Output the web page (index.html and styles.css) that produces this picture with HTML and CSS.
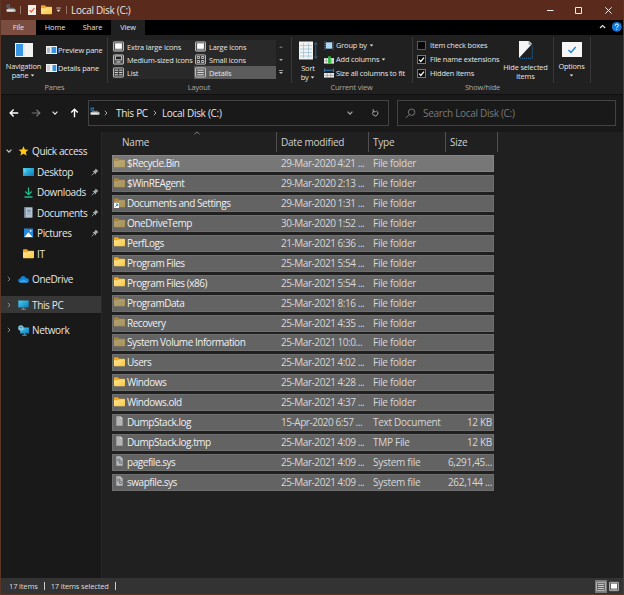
FILE: index.html
```html
<!DOCTYPE html>
<html lang="en">
<head>
<meta charset="utf-8">
<title>Local Disk (C:)</title>
<link rel="stylesheet" href="styles.css">
</head>
<body>
<svg class="defs" width="0" height="0">
  <defs>
    <linearGradient id="gold" x1="0" y1="0" x2="1" y2="1"><stop offset="0" stop-color="#ffe69a"/><stop offset="1" stop-color="#fbc83c"/></linearGradient>
    <linearGradient id="screen" x1="0" y1="0" x2="1" y2="1"><stop offset="0" stop-color="#45d3f0"/><stop offset="1" stop-color="#1277b8"/></linearGradient>
    <symbol id="folder" viewBox="0 0 11 10"><path d="M0 1Q0 .3.7.3H4L5.2 1.7H10.3Q11 1.7 11 2.4V8H0z" fill="#f0a81c"/><path d="M0 3.2H4.3L5.4 2.2H11V8.6Q11 9.3 10.3 9.3H.7Q0 9.3 0 8.6z" fill="url(#gold)"/></symbol>
    <symbol id="drive" viewBox="0 0 11 10"><path d="M.5.8h1.6v1.5H.5zM2.6.6h1.8v1.7H2.6zM.5 2.8h1.6v1.3H.5zM2.6 2.8h1.8v1.3H2.6z" fill="#1b86d8"/><path d="M2.6 4.2h6L10 6H1z" fill="#777"/><rect x=".5" y="5.7" width="10" height="2.8" rx=".8" fill="#e4e8e8"/><path d="M8 7h1.5" stroke="#35b558" stroke-width=".8"/></symbol>
    <symbol id="page" viewBox="0 0 8 11"><path d="M.5.3H5L7.5 2.8V10.6H.5z" fill="#b4b4b4"/><path d="M5 .3V2.8H7.5" fill="#ddd"/></symbol>
    <symbol id="syspage" viewBox="0 0 8 11"><path d="M.5.3H5L7.5 2.8V10.6H.5z" fill="#b9bbbc"/><circle cx="3.2" cy="4.4" r="1.4" fill="none" stroke="#667078"/><circle cx="5.1" cy="7.2" r="1.2" fill="none" stroke="#56616a"/></symbol>
    <symbol id="pin" viewBox="0 0 8 8"><path d="M4.7.5 7.5 3.3 6.5 3.6 5.1 5 4.8 6.5 1.5 3.2 3 2.9 4.4 1.5z" fill="#a3abb1"/><path d="M3 5 .7 7.3" stroke="#a3abb1" stroke-width=".9"/></symbol>
    <symbol id="right" viewBox="0 0 6 8"><path d="M1.8 1.8 4 4 1.8 6.2" fill="none" stroke="currentColor"/></symbol>
    <symbol id="down" viewBox="0 0 8 6"><path d="M1.6 1.7 4 4.1 6.4 1.7" fill="none" stroke="currentColor" stroke-width="1.2"/></symbol>
    <symbol id="tri" viewBox="0 0 5 3"><path d="M.7.4h3.6L2.5 2.4z" fill="currentColor"/></symbol>
    <symbol id="lines" viewBox="0 0 12 11"><rect x=".5" y=".5" width="11" height="10" rx=".8" fill="#666" stroke="#c8c8c8"/><path d="M2.5 3h7M2.5 5.5h7M2.5 8h7" stroke="#eee" stroke-width=".9"/></symbol>
    <symbol id="big" viewBox="0 0 12 11"><rect x=".5" y=".5" width="11" height="10" rx=".8" fill="#555" stroke="#c8c8c8"/><path d="M2.3 2h7.4v6H2.3z" fill="#fff"/><path d="M2 9h8" stroke="#ddd" stroke-width=".6"/></symbol>
    <symbol id="med" viewBox="0 0 12 11"><rect x=".5" y=".5" width="11" height="10" rx=".8" fill="#555" stroke="#c8c8c8"/><path d="M2.7 1.8h6.6v4H2.7z" fill="#222" stroke="#eee" stroke-width=".8"/><path d="M4 8.2h4" stroke="#eee"/></symbol>
    <symbol id="small" viewBox="0 0 12 11"><rect x=".5" y=".5" width="11" height="10" rx=".8" fill="#333" stroke="#c8c8c8"/><path d="M2.5 2.2h2.4v2.2H2.5zM7.2 2.2h2.4v2.2H7.2zM2.5 6.6h2.4v2.2H2.5zM7.2 6.6h2.4v2.2H7.2z" fill="none" stroke="#eee" stroke-width=".8"/></symbol>
    <symbol id="list" viewBox="0 0 12 11"><rect x=".5" y=".5" width="11" height="10" rx=".8" fill="#444" stroke="#c8c8c8"/><path d="M2 3h3.4M2 5.5h3.4M2 8h3.4M6.7 3h3.4M6.7 5.5h3.4M6.7 8h3.4" stroke="#eee" stroke-width=".9"/></symbol>
    <symbol id="check" viewBox="0 0 9 9"><rect x=".5" y=".5" width="8" height="8" fill="#0b0b0b" stroke="#777"/><path d="M2.1 4.6 3.8 6.4 7 2.6" fill="none" stroke="#fff" stroke-width="1.3"/></symbol>
    <symbol id="monitor" viewBox="0 0 11 10"><path d="M.3.5h10.4v7H.3z" fill="url(#screen)"/><path d="M5.5 7.5v1.4M3 9.2h5" stroke="#58aed0" stroke-width=".9"/></symbol>
  </defs>
</svg>
<div class="window">
  <header class="titlebar">
    <svg class="t-drive" width="10" height="9"><use href="#drive"/></svg>
    <i class="t-sep"></i>
    <svg class="t-props" width="8" height="10" viewBox="0 0 8 10"><path d="M0 0h8v10H0z" fill="#f4eeea"/><path d="M1.7 5.2 3.3 7 6.4 3" fill="none" stroke="#e0622c" stroke-width="1.2"/></svg>
    <svg class="t-folder" width="11" height="10"><use href="#folder"/></svg>
    <svg class="t-more" width="5" height="6" viewBox="0 0 5 6"><path d="M.3 1h4.4" stroke="#ddd" stroke-width=".8"/><path d="M.5 2.8h4L2.5 5z" fill="#ddd"/></svg>
    <i class="t-sep"></i>
    <h1>Local Disk (C:)</h1>
    <svg class="controls" width="68" height="10" viewBox="0 0 68 10"><path d="M1 5.5h6.5M29.5 2.5h6v6h-6zM59.3 2.3l6.3 6.3M65.6 2.3 59.3 8.6" fill="none" stroke="#eee"/></svg>
  </header>
  <nav class="tabs">
    <span class="tab file">File</span><span class="tab home">Home</span><span class="tab share">Share</span><span class="tab view">View</span>
    <svg class="help" width="24" height="12" viewBox="0 0 24 12"><path d="M1 8 3.6 5.5 6.2 8" fill="none" stroke="#ddd" stroke-width="1.2"/><circle cx="17.8" cy="6.8" r="4.9" fill="#1679d9"/><path d="M16.2 5.7q0-1.7 1.6-1.7t1.6 1.5q0 .8-1.6 1.7v.6M17.8 8.9v1" fill="none" stroke="#fff"/></svg>
  </nav>
  <section class="ribbon">
    <div class="group panes">
      <div class="group-body">
        <div class="large nav-pane"><svg width="18" height="14" viewBox="0 0 18 14"><path d="M0 0h18v14H0z" fill="#f2f2f2"/><path d="M1 1h7v12H1z" fill="#3795e6"/><path d="M9 1v12" stroke="#ddd"/></svg><span>Navigation<br>pane <svg width="5" height="3"><use href="#tri"/></svg></span></div>
        <div class="stack pane-stack">
          <span><svg width="11" height="8" viewBox="0 0 11 8"><path d="M0 0h11v8H0z" fill="#f2f2f2"/><path d="M1 1.5h3V7H1z" fill="#aeb9c2"/><path d="M5.5 1h4.7v6H5.5z" fill="#3795e6"/></svg>Preview pane</span>
          <span><svg width="11" height="8" viewBox="0 0 11 8"><path d="M0 0h11v8H0z" fill="#f2f2f2"/><path d="M1 2h3M1 4h3M1 6h3" stroke="#aaa"/><path d="M6.5 1h3.7v6H6.5z" fill="#3795e6"/></svg>Details pane</span>
        </div>
      </div>
      <div class="caption">Panes</div>
    </div>
    <div class="group layout">
      <div class="group-body">
        <div class="gallery">
          <span><svg width="11" height="11"><use href="#big"/></svg>Extra large icons</span><span><svg width="11" height="11"><use href="#big"/></svg>Large icons</span>
          <span><svg width="11" height="11"><use href="#med"/></svg>Medium-sized icons</span><span><svg width="11" height="11"><use href="#small"/></svg>Small icons</span>
          <span><svg width="11" height="11"><use href="#list"/></svg>List</span><span class="selected"><svg width="11" height="11"><use href="#lines"/></svg>Details</span>
        </div>
        <svg class="scroll" width="9" height="40" viewBox="0 0 9 40"><path d="M3 9h4L5 7z" fill="#666"/><path d="M3 20h4L5 22z" fill="#aaa"/><path d="M3 31.5h4" stroke="#bbb" stroke-width=".8"/><path d="M3 33h4L5 35z" fill="#bbb"/></svg>
      </div>
      <div class="caption">Layout</div>
    </div>
    <div class="group current">
      <div class="group-body">
        <div class="large sort"><svg width="19" height="19" viewBox="0 0 19 19"><path d="M0 .5h14v18H0z" fill="#f3f3f3"/><path d="M1 4.5h12M1 8h12M1 11.5h12M1 15h12M4.5 2v15M9.5 2v15" stroke="#9fc3d5" stroke-width=".8"/><path d="M16.8 2v15M15.4 3.5 16.8 1.6l1.4 1.9M15.4 15.5l1.4 1.9 1.4-1.9" fill="none" stroke="#2477bd" stroke-width=".8"/></svg><span>Sort<br>by <svg width="5" height="3"><use href="#tri"/></svg></span></div>
        <div class="stack current-stack">
          <span><svg width="10" height="9" viewBox="0 0 11 9"><path d="M1 0v9M10 0v9" stroke="#999" stroke-dasharray="1 1"/><path d="M2 1h7v7H2z" fill="#a9d9fb"/></svg>Group by <svg class="tri" width="5" height="3"><use href="#tri"/></svg></span>
          <span><svg width="10" height="9" viewBox="0 0 11 9"><path d="M0 3h11v6H0z" fill="#eee"/><path d="M2.5 3v6M8.5 3v6M0 6h11" stroke="#888" stroke-width=".6"/><path d="M4.5 1h3v8h-3z" fill="#27bd35"/></svg>Add columns <svg class="tri" width="5" height="3"><use href="#tri"/></svg></span>
          <span><svg width="10" height="10" viewBox="0 0 11 10"><path d="M0 5h11v5H0z" fill="#eee"/><path d="M3.5 5v5M7.5 5v5M0 7.5h11" stroke="#777" stroke-width=".6"/><path d="M.5 0v4M10.5 0v4M1 2h9" stroke="#3189d0"/></svg>Size all columns to fit</span>
        </div>
      </div>
      <div class="caption">Current view</div>
    </div>
    <div class="group show">
      <div class="group-body">
        <div class="stack show-stack">
          <span><svg width="9" height="9" viewBox="0 0 9 9"><rect x=".5" y=".5" width="8" height="8" fill="#080808" stroke="#5a5a5a"/></svg>Item check boxes</span>
          <span><svg width="9" height="9"><use href="#check"/></svg>File name extensions</span>
          <span><svg width="9" height="9"><use href="#check"/></svg>Hidden items</span>
        </div>
        <div class="large hide"><svg width="14" height="18" viewBox="0 0 14 18"><path d="M0 0h10l3 3L0 17z" fill="#f5f5f5"/><path d="M10 0v3.5h3" fill="#bbb" stroke="#777" stroke-width=".6"/><path d="M1 17.3h12.3V5" fill="none" stroke="#2879b8" stroke-dasharray="1 1"/></svg><span>Hide selected<br>items</span></div>
      </div>
      <div class="caption">Show/hide</div>
    </div>
    <div class="group options"><div class="large"><svg width="20" height="15" viewBox="0 0 20 15"><path d="M0 0h20v15H0z" fill="#f6f6f6"/><path d="M6.5 8 9 10.5 13.7 5" fill="none" stroke="#2385d8" stroke-width="1.5"/></svg><span>Options<br><svg width="5" height="3"><use href="#tri"/></svg></span></div></div>
  </section>
  <div class="addressbar">
    <svg class="nav-arrow back" width="10" height="10" viewBox="0 0 10 10"><path d="M1.2 5h8M4.6 1.6 1.2 5l3.4 3.4" fill="none" stroke="#fff" stroke-width="1.4"/></svg>
    <svg class="nav-arrow forward" width="10" height="10" viewBox="0 0 10 10"><path d="M.8 5h8M5.4 1.6 8.8 5 5.4 8.4" fill="none" stroke="#777" stroke-width="1.2"/></svg>
    <svg class="nav-arrow recent" width="8" height="6"><use href="#down"/></svg>
    <svg class="nav-arrow up" width="9" height="10" viewBox="0 0 9 10"><path d="M4.5 9.3V1.2M1.2 4.5l3.3-3.3 3.3 3.3" fill="none" stroke="#fff" stroke-width="1.4"/></svg>
    <div class="path">
      <svg class="path-drive" width="10" height="9"><use href="#drive"/></svg>
      <svg class="crumb" width="6" height="8"><use href="#right"/></svg><span class="pc">This PC</span>
      <svg class="crumb" width="6" height="8"><use href="#right"/></svg><span class="disk">Local Disk (C:)</span>
      <svg class="path-down" width="8" height="6"><use href="#down"/></svg>
      <svg class="refresh" width="9" height="10" viewBox="0 0 9 10"><path d="M2.4 3.5A2.6 2.6 0 1 0 5.3 2.9M2.2 1.2v2.5h2.5" fill="none" stroke="#aaa"/></svg>
    </div>
    <div class="search"><svg width="11" height="11" viewBox="0 0 11 11"><circle cx="6.6" cy="4.2" r="3.2" fill="none" stroke="#777"/><path d="M4.3 6.5.8 10" stroke="#777"/></svg>Search Local Disk (C:)</div>
  </div>
  <main>
    <aside>
      <div class="item root"><svg class="twist open" width="8" height="6"><use href="#down"/></svg><svg width="10" height="10" viewBox="0 0 10 10"><path d="m5 .2 1.4 3.2 3.5.4-2.6 2.3.8 3.5L5 7.8 1.9 9.6l.8-3.5L.1 3.8l3.5-.4z" fill="#ffc914"/></svg>Quick access</div>
      <div class="item"><svg width="11" height="10" viewBox="0 0 11 10"><path d="M0 1h11v8H0z" fill="url(#screen)"/><path d="M1.5 3h1M1.5 5h1" stroke="#fff" stroke-width=".8"/></svg>Desktop<svg class="pin" width="8" height="8"><use href="#pin"/></svg></div>
      <div class="item"><svg width="11" height="11" viewBox="0 0 11 11"><path d="M5.5.5v7M2.2 4.5l3.3 3.2 3.3-3.2M1.5 10h8" fill="none" stroke="#1dbb8a" stroke-width="1.3"/></svg>Downloads<svg class="pin" width="8" height="8"><use href="#pin"/></svg></div>
      <div class="item"><svg width="11" height="11" viewBox="0 0 11 11"><path d="M1.5.3h8v10.4h-8z" fill="#b4c3d5"/><path d="M1.5.3h1.5v10.4H1.5z" fill="#8196ad"/><path d="M4.2 2.6h3.4v2.6H4.2z" fill="#8399b3"/><path d="M4 7h4" stroke="#8399b3" stroke-width=".8"/></svg>Documents<svg class="pin" width="8" height="8"><use href="#pin"/></svg></div>
      <div class="item"><svg width="11" height="10" viewBox="0 0 11 10"><path d="M1 .5h9v9H1z" fill="#2388dc"/><path d="m1.5 9 3.8-4.7L9.5 9z" fill="#fff"/><circle cx="7.7" cy="2.8" r=".9" fill="#fff"/></svg>Pictures<svg class="pin" width="8" height="8"><use href="#pin"/></svg></div>
      <div class="item"><svg width="11" height="10"><use href="#folder"/></svg>IT</div>
      <div class="item root apart"><svg class="twist" width="6" height="8"><use href="#right"/></svg><svg width="11" height="8" viewBox="0 0 11 8"><path d="M2 7.5Q0 7.2.1 5.3.4 3.4 2.3 3.4 3 .8 5.4 1q1.8.2 2.4 1.9 2.9 0 3.1 2.3 0 2.2-2 2.3z" fill="#1682d5"/><path d="m1 7 4.2-2.6L10.5 7q-.6.5-1.5.5H2z" fill="#31a9ee"/></svg>OneDrive</div>
      <div class="item root apart active"><svg class="twist" width="6" height="8"><use href="#right"/></svg><svg width="11" height="10"><use href="#monitor"/></svg>This PC</div>
      <div class="item root apart"><svg class="twist" width="6" height="8"><use href="#right"/></svg><svg width="11" height="11" viewBox="0 0 11 11"><path d="M2.2 2.5H11v6H2.2z" fill="url(#screen)"/><path d="M6.5 8.5v1.3M4.4 10.2h4.3" stroke="#58aed0"/><circle cx="2.9" cy="3" r="2.7" fill="#8bd0ed"/><path d="M1 2.5h3.5M3 .7v4.6" stroke="#2d83b5" stroke-width=".6"/></svg>Network</div>
    </aside>
    <section class="files">
      <div class="columns"><span>Name<svg class="sort-mark" width="6" height="4" viewBox="0 0 6 4"><path d="M.5 3.2 3 .9l2.5 2.3" fill="none" stroke="#888" stroke-width=".9"/></svg></span><span>Date modified</span><span>Type</span><span>Size</span></div>
      <div class="rows">
        <div class="row focus"><svg class="dim"><use href="#folder"/></svg><span>$Recycle.Bin</span><span>29-Mar-2020 4:21 ...</span><span>File folder</span><span></span></div>
        <div class="row"><svg class="dim"><use href="#folder"/></svg><span>$WinREAgent</span><span>29-Mar-2020 2:13 ...</span><span>File folder</span><span></span></div>
        <div class="row"><svg viewBox="0 0 11 10"><use class="dim" href="#folder" width="11" height="10"/><path d="M0 5h5v5H0z" fill="#fff"/><path d="M1.3 8.7 3.6 6.4M2 6.2h1.8V8" fill="none" stroke="#1676c4" stroke-width=".9"/></svg><span>Documents and Settings</span><span>29-Mar-2020 1:31 ...</span><span>File folder</span><span></span></div>
        <div class="row"><svg class="dim"><use href="#folder"/></svg><span>OneDriveTemp</span><span>30-Mar-2020 1:52 ...</span><span>File folder</span><span></span></div>
        <div class="row"><svg><use href="#folder"/></svg><span>PerfLogs</span><span>21-Mar-2021 6:36 ...</span><span>File folder</span><span></span></div>
        <div class="row"><svg><use href="#folder"/></svg><span>Program Files</span><span>25-Mar-2021 5:54 ...</span><span>File folder</span><span></span></div>
        <div class="row"><svg><use href="#folder"/></svg><span>Program Files (x86)</span><span>25-Mar-2021 5:54 ...</span><span>File folder</span><span></span></div>
        <div class="row"><svg class="dim"><use href="#folder"/></svg><span>ProgramData</span><span>25-Mar-2021 8:16 ...</span><span>File folder</span><span></span></div>
        <div class="row"><svg class="dim"><use href="#folder"/></svg><span>Recovery</span><span>25-Mar-2021 4:35 ...</span><span>File folder</span><span></span></div>
        <div class="row"><svg class="dim"><use href="#folder"/></svg><span>System Volume Information</span><span>25-Mar-2021 10:0...</span><span>File folder</span><span></span></div>
        <div class="row"><svg><use href="#folder"/></svg><span>Users</span><span>25-Mar-2021 4:02 ...</span><span>File folder</span><span></span></div>
        <div class="row"><svg><use href="#folder"/></svg><span>Windows</span><span>25-Mar-2021 4:28 ...</span><span>File folder</span><span></span></div>
        <div class="row"><svg><use href="#folder"/></svg><span>Windows.old</span><span>25-Mar-2021 4:37 ...</span><span>File folder</span><span></span></div>
        <div class="row"><svg><use href="#page"/></svg><span>DumpStack.log</span><span>15-Apr-2020 6:57 ...</span><span>Text Document</span><span>12 KB</span></div>
        <div class="row"><svg><use href="#page"/></svg><span>DumpStack.log.tmp</span><span>25-Mar-2021 4:09 ...</span><span>TMP File</span><span>12 KB</span></div>
        <div class="row"><svg><use href="#syspage"/></svg><span>pagefile.sys</span><span>25-Mar-2021 4:09 ...</span><span>System file</span><span>6,291,45...</span></div>
        <div class="row"><svg><use href="#syspage"/></svg><span>swapfile.sys</span><span>25-Mar-2021 4:09 ...</span><span>System file</span><span>262,144 ...</span></div>
      </div>
    </section>
  </main>
  <footer><span class="count">17 items</span><i></i><span class="chosen">17 items selected</span><i></i><div class="modes"><b><svg width="10" height="11"><use href="#lines"/></svg></b><svg width="10" height="11"><use href="#big"/></svg></div></footer>
</div>
</body>
</html>
```
FILE: styles.css
```css
* { box-sizing: border-box; }
body { margin: 0; background: #191919; color: #e6e6e6; font: 10px "Open Sans", "Noto Sans", sans-serif; letter-spacing: -.3px; overflow: hidden; }
.defs { position: absolute; }
svg { flex: none; display: block; }
.window { width: 624px; height: 595px; display: flex; flex-direction: column; border: 1px solid #5b3627; border-top: 0; background: #191919; white-space: nowrap; }
.titlebar { height: 20px; flex: none; display: flex; align-items: center; background: #5a2b1c; padding-left: 5px; }
.t-drive { margin-top: -3px; }
.t-sep { width: 1px; height: 8px; background: #94766a; margin: 0 7px 0 4px; }
.t-folder { margin-left: 5px; }
.t-more { margin-left: 4px; }
.t-more + .t-sep { margin: 0 4px 0 5px; }
h1 { margin: 0; font-size: 10px; font-weight: 400; letter-spacing: -.3px; }
.controls { margin-left: auto; margin-right: 9px; }
.tabs { height: 15px; flex: none; display: flex; background: #000; font-size: 7.3px; letter-spacing: -.05px; font-weight: 500; line-height: 15px; }
.tab { text-align: center; }
.file { width: 35px; background: #7b4c40; }
.home { width: 38px; }
.share { width: 37px; }
.view { width: 34px; background: #202020; }
.help { margin: 0 0 0 auto; }
.ribbon { height: 60px; flex: none; display: flex; background: #202020; border-bottom: 1px solid #101010; font-size: 7.4px; letter-spacing: -.15px; font-weight: 500; }
.group { display: flex; flex-direction: column; padding-top: 2px; position: relative; }
.group::after { content: ""; position: absolute; right: 0; top: 2px; height: 46px; border-right: 1px solid #383838; }
.group-body { height: 45px; display: flex; }
.caption { text-align: center; line-height: 11px; color: #aaa; }
.panes { width: 107px; }
.layout { width: 184px; }
.layout .caption { padding-right: 2px; }
.current { width: 121px; }
.current .caption { padding-right: 2px; }
.show { width: 141px; }
.show .caption { padding-right: 2px; }
.options { width: 37px; }
.large { display: flex; flex-direction: column; align-items: center; text-align: center; line-height: 8.5px; }
.large span svg { display: inline-block; vertical-align: 1px; }
.nav-pane { width: 45px; padding-top: 6px; gap: 5px; }
.stack { display: flex; flex-direction: column; }
.stack > span { display: flex; align-items: center; height: 14px; }
.pane-stack { padding-top: 6px; gap: 4px; }
.pane-stack svg { margin-right: 1px; }
.gallery { margin: 3px 0 0 4px; width: 164px; height: 39px; display: grid; grid-template: repeat(3, 13px) / 82px 82px; background: #292929; }
.gallery span { display: flex; align-items: center; gap: 3px; padding-left: 1px; }
.gallery .selected { background: #5c5c5c; }
.scroll { margin-top: 2px; }
.sort { width: 32px; padding-top: 4px; gap: 4px; }
.current-stack svg { margin-right: 2px; }
.current-stack .tri { margin-left: 2px; }
.show-stack { width: 88px; padding-left: 4px; }
.show-stack svg { margin-right: 4px; }
.current-stack, .show-stack { padding-top: 1px; }
.hide { width: 49px; padding-top: 4px; gap: 4px; }
.options .large { padding: 5px 2px 0 0; gap: 5px; }
.addressbar { height: 37px; flex: none; display: flex; align-items: center; padding-bottom: 1px; }
.back { margin-left: 8px; }
.forward { margin-left: 12px; }
.recent { margin-left: 10px; }
.up { margin-left: 11px; }
.path { height: 26px; width: 301px; margin-left: 9px; border: 1px solid #434343; display: flex; align-items: center; padding-left: 1px; }
.path-drive { margin-top: -3px; }
.crumb { margin: 0 7px 0 3px; color: #aaa; }
.pc + .crumb { margin: 0 4px; }
.pc, .disk { letter-spacing: -.28px; }
.path-down { margin-left: auto; margin-right: 17px; color: #aaa; }
.refresh { margin-right: 8px; }
.search { height: 26px; width: 219px; margin-left: 8px; border: 1px solid #434343; display: flex; align-items: center; padding-left: 7px; gap: 7px; color: #7a7a7a; }
main { flex: 1; display: flex; min-height: 0; }
aside { width: 101px; flex: none; padding-top: 10.5px; border-right: 1px solid #292929; }
.item { height: 17px; margin-bottom: 3.5px; display: flex; align-items: center; padding-left: 22px; gap: 3px; letter-spacing: -.36px; }
.root { padding-left: 4px; }
.twist { color: #888; width: 8px; margin-right: 2px; }
.root svg:nth-child(2) { width: 11px; }
.root .twist { margin-right: 2px; }
.open { color: #ccc; }
.pin { margin-left: auto; margin-right: 2px; }
.apart { margin-top: 8.6px; }
.active { background: #373737; }
.files { flex: 1; background: #202020; padding-left: 10px; }
.columns { height: 19px; width: 386px; display: grid; grid-template-columns: 165px 92px 77px 52px; line-height: 20px; color: #d0d0d0; letter-spacing: -.22px; }
.columns span { border-right: 1px solid #505050; padding-left: 4px; position: relative; }
.columns span:first-child { padding-left: 10px; }
.sort-mark { position: absolute; left: 82px; top: -1px; }
.rows { padding-top: 4.4px; }
.row { width: 382px; height: 17px; margin-bottom: 2.9px; display: grid; grid-template-columns: 11px 153px 92px 77px 45px; align-items: center; padding-left: 1px; background: #636363; border: 1px solid #6f6f6f; line-height: 15px; color: #d7d7d7; }
.row svg { width: 11px; height: 10px; margin-top: -2px; }
.row span:nth-child(2) { padding-left: 2px; color: #f0f0f0; letter-spacing: -.46px; }
.row span:nth-child(3) { padding-left: 3px; letter-spacing: -.45px; }
.row span:nth-child(4) { padding-left: 3px; letter-spacing: -.28px; }
.row span:last-child { text-align: right; }
.focus { background: #777; border-color: #858585; }
.dim { opacity: .48; }
footer { height: 16px; flex: none; display: flex; align-items: center; padding-left: 8px; background: #333; font-size: 7.5px; letter-spacing: -.15px; color: #ddd; }
footer i { width: 1px; height: 8px; background: #ccc; margin: 0 6px 0 6px; }
.modes { margin-left: auto; display: flex; align-items: center; gap: 2px; margin-right: 4px; }
.modes b { background: #777; padding: 1px; }
```
